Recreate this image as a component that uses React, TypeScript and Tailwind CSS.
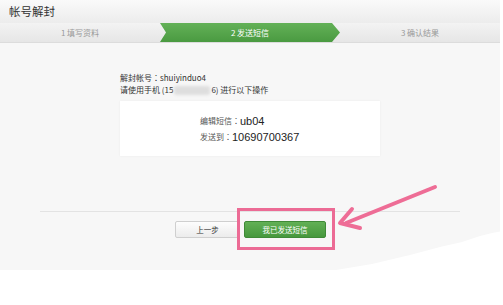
const font = "font-['Noto_Sans_CJK_SC','Liberation_Sans',sans-serif]";

const steps = [
  { label: "1 填写资料", active: false },
  { label: "2 发送短信", active: true },
  { label: "3 确认结果", active: false },
];

const Colon = () => <span className="font-['Noto_Sans_CJK_JP',sans-serif]">：</span>;

const App = () => {
  return (
    <div className={`relative w-[503px] h-[305px] overflow-hidden bg-white ${font}`}>
      <div className="flex h-[270px] w-[500px] flex-col bg-[#f7f7f7]">
        <div className="flex h-[23px] items-center bg-gradient-to-b from-[#fafafa] to-[#ececec] pl-[9px] text-[11.5px] leading-none text-[#333]">
          帐号解封
        </div>
        <div className="flex h-[20px] border-b border-[#dcdcdc] bg-gradient-to-b from-[#f3f3f3] to-[#e6e6e6] text-[8px]">
          {steps.map((s, i) =>
            s.active ? (
              <div
                key={i}
                className="flex w-[180px] items-center justify-center bg-gradient-to-b from-[#63b157] to-[#4a9a41] text-white [clip-path:polygon(0_0,172px_0,100%_50%,172px_100%,0_100%,6px_50%)]"
              >
                {s.label}
              </div>
            ) : (
              <div
                key={i}
                className={`flex items-center justify-center text-[#999] ${i === 0 ? "w-[160px]" : "flex-1"}`}
              >
                {s.label}
              </div>
            )
          )}
        </div>

        <div className="pl-[120px] pt-[29px] text-[8px] leading-[12px] text-[#333]">
          <div>解封帐号<Colon />shuiyinduo4</div>
          <div className="flex items-center">
            <span>请使用手机 (15</span>
            <span className="mx-[1px] h-[9px] w-[36px] rounded-[3px] bg-[#dedede] blur-[1.5px]" />
            <span>6) 进行以下操作</span>
          </div>
          <div className="mt-[5px] flex h-[55px] w-[260px] flex-col bg-white pl-[80px] pt-[12px] shadow-[0_0_2px_rgba(0,0,0,0.06)]">
            <div className="flex h-[16px] items-center">
              <span className="text-[8px] text-[#555]">编辑短信<Colon /></span>
              <span className="font-['Liberation_Sans',sans-serif] text-[11px] text-[#222]">ub04</span>
            </div>
            <div className="flex h-[16px] items-center">
              <span className="text-[8px] text-[#555]">发送到<Colon /></span>
              <span className="font-['Liberation_Sans',sans-serif] text-[11px] text-[#222]">10690700367</span>
            </div>
          </div>
        </div>

        <div className="mx-[40px] mt-[55px] h-px bg-[#e3e3e3]" />

        <div className="mt-[9px] flex gap-[4px] pl-[175px]">
          <button className="flex h-[17px] w-[65px] items-center justify-center rounded-[2px] border border-[#cfcfcf] bg-gradient-to-b from-[#fdfdfd] to-[#ececec] text-[7.5px] text-[#333]">
            上一步
          </button>
          <button className="flex h-[17px] w-[82px] items-center justify-center rounded-[2px] border border-[#3f8a37] bg-gradient-to-b from-[#62b055] to-[#46983d] text-[7.5px] text-white">
            我已发送短信
          </button>
        </div>
      </div>

      <div className="absolute left-[237px] top-[208px] h-[42px] w-[98px] border-[3px] border-[#ec6b95]" />

      <svg className="absolute left-0 top-0" width="503" height="305" viewBox="0 0 503 305">
        <path d="M435 187 L346 223" stroke="#ee6d96" strokeWidth="4" strokeLinecap="round" fill="none" />
        <path d="M352 209 L340 223 L360 228" stroke="#ee6d96" strokeWidth="4" strokeLinecap="round" strokeLinejoin="round" fill="none" />
        <polygon
          points="330,271 372,264 410,255 440,247 462,242 480,236 492,233 503,231 503,271"
          fill="#ffffff"
        />
      </svg>
    </div>
  );
};

export default App;
